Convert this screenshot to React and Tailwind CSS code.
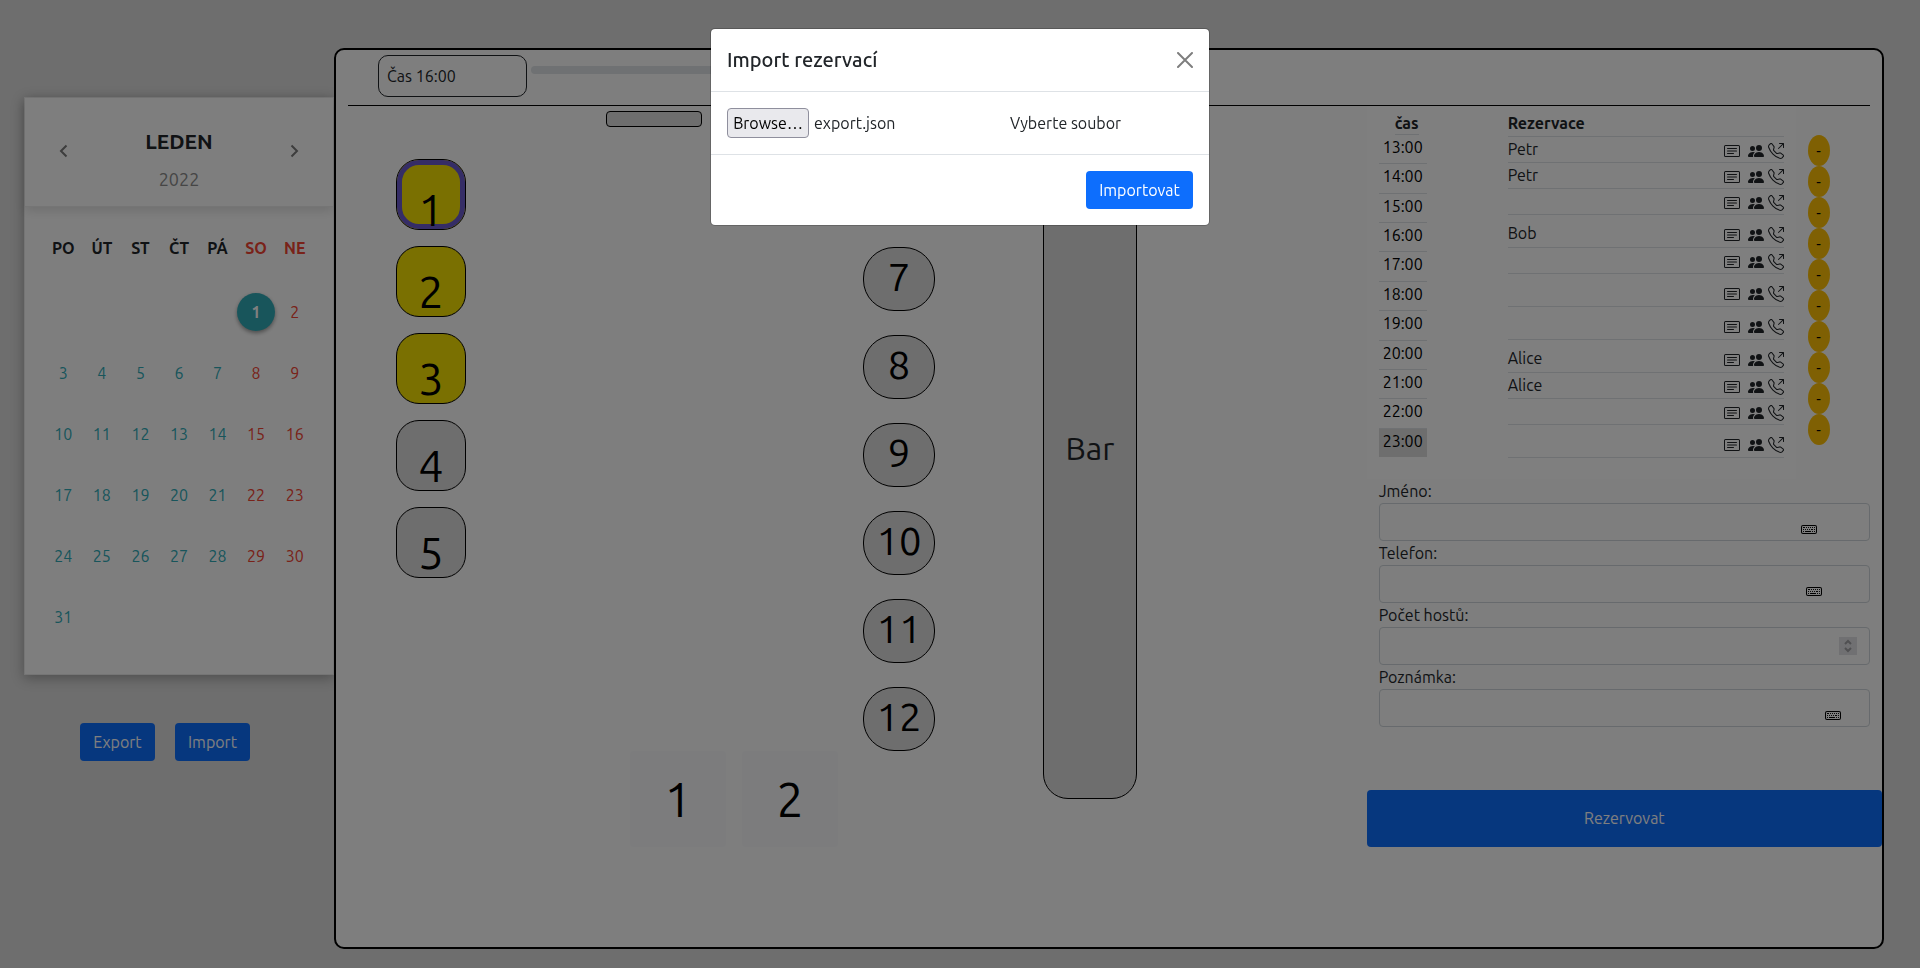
import React from "react";
import { BsCardText, BsPeopleFill, BsTelephoneOutbound, BsKeyboard } from "react-icons/bs";

const WEEKDAYS = ["PO", "ÚT", "ST", "ČT", "PÁ", "SO", "NE"];
const LEADING_BLANKS = 5;
const DAYS = Array.from({ length: 31 }, (_, i) => i + 1);

const TIMES = ["13:00", "14:00", "15:00", "16:00", "17:00", "18:00", "19:00", "20:00", "21:00", "22:00", "23:00"];

const RESERVATIONS = [
  { name: "Petr" },
  { name: "Petr" },
  { name: "" },
  { name: "Bob", tall: true },
  { name: "" },
  { name: "", tall: true },
  { name: "", tall: true },
  { name: "Alice", tall: true },
  { name: "Alice" },
  { name: "" },
  { name: "", tall: true },
];

function Chevron({ d }) {
  return (
    <svg width="9" height="14" viewBox="0 0 9 14" fill="none" stroke="#7a7a7a" strokeWidth="2" aria-hidden="true">
      <path d={d} />
    </svg>
  );
}

function Calendar() {
  return (
    <section className="border border-[#ebebeb] bg-[#fdfdfd] shadow-[0_3px_12px_rgba(0,0,0,0.3)]">
      <header className="flex h-[109px] items-center justify-between border-b border-[#ebebeb] px-[29px] pb-0.5 shadow-[0_4px_10px_rgba(0,0,0,0.12)]">
        <button type="button" aria-label="Předchozí měsíc" className="flex h-8 w-[18px] items-center justify-center">
          <Chevron d="M7.5 1.5 2 7l5.5 5.5" />
        </button>
        <div className="pt-5 text-center">
          <h2 className="text-[21px] leading-6 font-bold text-[#212529]">LEDEN</h2>
          <p className="mt-3 text-lg leading-7 text-[#8c8c8c]">2022</p>
        </div>
        <button type="button" aria-label="Další měsíc" className="flex h-8 w-[18px] items-center justify-center">
          <Chevron d="M1.5 1.5 7 7l-5.5 5.5" />
        </button>
      </header>
      <div className="pt-2 pr-[19px] pb-[27px] pl-[19px]">
        <div className="grid grid-cols-7">
          {WEEKDAYS.map((d, i) => (
            <div
              key={d}
              className={
                i > 4
                  ? "flex h-[66px] items-center justify-center text-base font-bold text-[#f24432]"
                  : "flex h-[66px] items-center justify-center text-base font-bold text-[#212529]"
              }
            >
              {d}
            </div>
          ))}
          {Array.from({ length: LEADING_BLANKS }, (_, i) => (
            <div key={"b" + i} />
          ))}
          {DAYS.map((day) => {
            const weekend = (day + LEADING_BLANKS - 1) % 7 > 4;
            return (
              <div key={day} className="flex h-[61px] items-center justify-center">
                {day === 1 ? (
                  <button
                    type="button"
                    className="h-[38px] w-[38px] shrink-0 rounded-full bg-[#30abb7] text-base font-bold text-white shadow-[0_2px_4px_rgba(0,0,0,0.4)]"
                  >
                    1
                  </button>
                ) : (
                  <button
                    type="button"
                    className={weekend ? "h-9 w-9 text-base text-[#f24432]" : "h-9 w-9 text-base text-[#30abb7]"}
                  >
                    {day}
                  </button>
                )}
              </div>
            );
          })}
        </div>
      </div>
    </section>
  );
}

function SquareTable({ n, busy, selected }) {
  return (
    <button
      type="button"
      className={
        "h-[71px] w-[70px] rounded-[23px] border border-black text-[45px] text-black " +
        (busy ? "bg-[#f4e102]" : "bg-[#dcdcdc]")
      }
    >
      <span
        className={
          "flex h-full items-start justify-center rounded-[22px] pt-[18px] leading-[54px] " +
          (selected ? "border-[5px] border-[#6a5acd]" : "")
        }
      >
        {n}
      </span>
    </button>
  );
}

function FloorPlan() {
  return (
    <div className="col-span-2 flex items-start">
      <div className="mt-[53px] ml-[60px] flex flex-col gap-4">
        <SquareTable n={1} busy selected />
        <SquareTable n={2} busy />
        <SquareTable n={3} busy />
        <SquareTable n={4} />
        <SquareTable n={5} />
      </div>
      <div className="mt-[5px] ml-[140px] flex flex-col">
        <div className="h-4 w-24 rounded border border-black bg-[#dcdcdc]" />
        <div className="mt-[624px] ml-6 flex gap-4">
          {[1, 2].map((n) => (
            <button key={n} type="button" className="h-24 w-24 rounded bg-[#f8f9fa] text-5xl text-black">
              {n}
            </button>
          ))}
        </div>
      </div>
      <div className="mt-[141px] ml-[25px] flex flex-col gap-6">
        {[7, 8, 9, 10, 11, 12].map((n) => (
          <button
            key={n}
            type="button"
            className="h-16 w-[72px] rounded-[31px] border border-black bg-[#dcdcdc] pb-1 text-[40px] leading-[58px] text-black"
          >
            {n}
          </button>
        ))}
      </div>
      <div className="mt-[5px] ml-[108px] flex h-[688px] w-[94px] items-center justify-center rounded-[25px] border border-black bg-[#dcdcdc] pb-[14px] text-[32px] text-[#212529]">
        Bar
      </div>
    </div>
  );
}

function Schedule() {
  return (
    <div className="flex items-start text-base leading-6 text-[#212529]">
      <div className="flex h-[373px] w-[429px] justify-between bg-white px-3 pt-[5px]">
        <div className="flex w-12 flex-col text-black">
          <h3 className="ml-4 h-6 w-6 border-b border-[#dee2e6] text-center font-bold text-[#212529]">
            čas
          </h3>
          <table className="h-[322px] w-full border-collapse text-center">
            <tbody>
              {TIMES.map((t) => (
                <tr key={t} className={t === "23:00" ? "bg-[#dcdcdc]" : "border-b border-[#dee2e6]"}>
                  <td className="p-0 align-top">{t}</td>
                </tr>
              ))}
            </tbody>
          </table>
        </div>
        <div className="w-[276px]">
          <h3 className="h-[26px] border-b border-[#dee2e6] font-bold">Rezervace</h3>
          <ul>
            {RESERVATIONS.map((r, i) => (
              <li
                key={i}
                className={
                  "flex items-end border-b border-[#dee2e6] " + (r.tall ? "h-[33px] pb-px" : "h-[26px]")
                }
              >
                <span className="mb-px flex-1">{r.name}</span>
                <BsCardText className="mr-2 mb-[3px] h-4 w-4" aria-label="Poznámka" />
                <BsPeopleFill className="mr-1 mb-[3px] h-4 w-4" aria-label="Hosté" />
                <BsTelephoneOutbound className="mb-[3px] h-4 w-4" aria-label="Telefon" />
              </li>
            ))}
          </ul>
        </div>
      </div>
      <div className="mt-[29px] ml-3 flex flex-col">
        {TIMES.slice(1).map((t) => (
          <button
            key={t}
            type="button"
            aria-label={"Odebrat " + t}
            className="h-[31px] w-[22px] rounded-[50%] bg-[#ffc107] text-center text-base text-black"
          >
            -
          </button>
        ))}
      </div>
    </div>
  );
}

const INPUT =
  "block h-[38px] w-full rounded border border-[#ced4da] bg-transparent px-3 text-base text-[#212529] [appearance:textfield] [&::-webkit-inner-spin-button]:appearance-none";

function Field({ id, label, type, children }) {
  return (
    <div>
      <label htmlFor={id} className="block text-base leading-6 text-[#212529]">
        {label}
      </label>
      <div className="relative">
        <input id={id} type={type} className={INPUT} />
        {children}
      </div>
    </div>
  );
}

function BookingForm() {
  return (
    <form onSubmit={(e) => e.preventDefault()}>
      <div className="px-3">
        <Field id="name" label="Jméno:" type="text">
          <BsKeyboard className="absolute top-[18px] right-[53px] h-4 w-4 text-black" />
        </Field>
        <Field id="phone" label="Telefon:" type="tel">
          <BsKeyboard className="absolute top-[18px] right-12 h-4 w-4 text-black" />
        </Field>
        <Field id="guests" label="Počet hostů:" type="number">
          <span className="absolute top-[10px] right-[13px] flex h-[18px] w-[18px] items-center justify-center bg-[#e1e1e4]">
            <svg width="8" height="14" viewBox="0 0 8 14" fill="none" stroke="#a0a0a4" strokeWidth="2" aria-hidden="true">
              <path d="M1 5l3-3 3 3M1 9l3 3 3-3" />
            </svg>
          </span>
        </Field>
        <Field id="note" label="Poznámka:" type="text">
          <BsKeyboard className="absolute top-[18px] right-[29px] h-4 w-4 text-black" />
        </Field>
      </div>
      <button type="submit" className="mt-[63px] block h-[57px] w-full rounded bg-[#0d6efd] pb-0.5 text-base text-white">
        Rezervovat
      </button>
    </form>
  );
}

function ImportDialog() {
  return (
    <div className="fixed inset-0 z-10 bg-black/50">
      <div
        role="dialog"
        aria-modal="true"
        aria-labelledby="import-title"
        className="mx-auto mt-7 w-[500px] rounded-[5px] border border-black/20 bg-white bg-clip-padding text-[#212529]"
      >
        <header className="flex items-center justify-between border-b border-[#dee2e6] p-4">
          <h1 id="import-title" className="text-xl leading-[30px] font-medium">
            Import rezervací
          </h1>
          <button type="button" aria-label="Zavřít" className="h-4 w-4 opacity-50">
            <svg width="16" height="16" viewBox="0 0 16 16" fill="none" stroke="#000" strokeWidth="2" strokeLinecap="round" aria-hidden="true">
              <path d="M1 1l14 14M15 1 1 15" />
            </svg>
          </button>
        </header>
        <div className="flex items-center border-b border-[#dee2e6] p-4">
          <input id="import-file" type="file" className="sr-only" />
          <label
            htmlFor="import-file"
            className="flex h-[30px] w-[82px] items-center justify-center rounded border border-[#8f8f9d] bg-[#e9e9ed] text-base text-black"
          >
            Browse…
          </label>
          <span className="ml-[5px] w-[196px] text-base">export.json</span>
          <span className="text-base">Vyberte soubor</span>
        </div>
        <footer className="flex justify-end p-4">
          <button type="button" className="h-[38px] w-[107px] rounded bg-[#0d6efd] text-base text-white">
            Importovat
          </button>
        </footer>
      </div>
    </div>
  );
}

export default function App() {
  return (
    <div className="flex min-h-screen bg-[#dcdcdc] pt-12 pr-9 pb-[19px] pl-6 font-['Ubuntu','Noto_Sans',sans-serif]">
      <aside className="w-[310px] shrink-0 pt-[49px]">
        <Calendar />
        <div className="mt-12 ml-14 flex gap-5">
          <button type="button" className="h-[38px] w-[75px] rounded bg-[#0d6efd] text-base text-white">
            Export
          </button>
          <button type="button" className="h-[38px] w-[75px] rounded bg-[#0d6efd] text-base text-white">
            Import
          </button>
        </div>
      </aside>
      <main className="relative flex-1 rounded-[10px] border-2 border-black bg-[#fdfdfd]">
        <div className="mx-3 flex h-14 items-start border-b border-black pt-[5px] pl-[30px]">
          <label
            htmlFor="time"
            className="flex h-[42px] w-[149px] items-center rounded-[10px] border border-[#212529] px-2 text-base text-[#212529]"
          >
            Čas 16:00
          </label>
          <input
            id="time"
            type="range"
            min="13"
            max="23"
            defaultValue="16"
            className="mt-[11px] ml-1 h-2 w-[640px] appearance-none rounded-full bg-[#dee2e6] [&::-webkit-slider-thumb]:h-4 [&::-webkit-slider-thumb]:w-4 [&::-webkit-slider-thumb]:appearance-none [&::-webkit-slider-thumb]:rounded-full [&::-webkit-slider-thumb]:bg-[#0d6efd]"
          />
        </div>
        <div className="grid grid-cols-3">
          <FloorPlan />
          <div>
            <Schedule />
            <BookingForm />
          </div>
        </div>
      </main>
      <ImportDialog />
    </div>
  );
}
